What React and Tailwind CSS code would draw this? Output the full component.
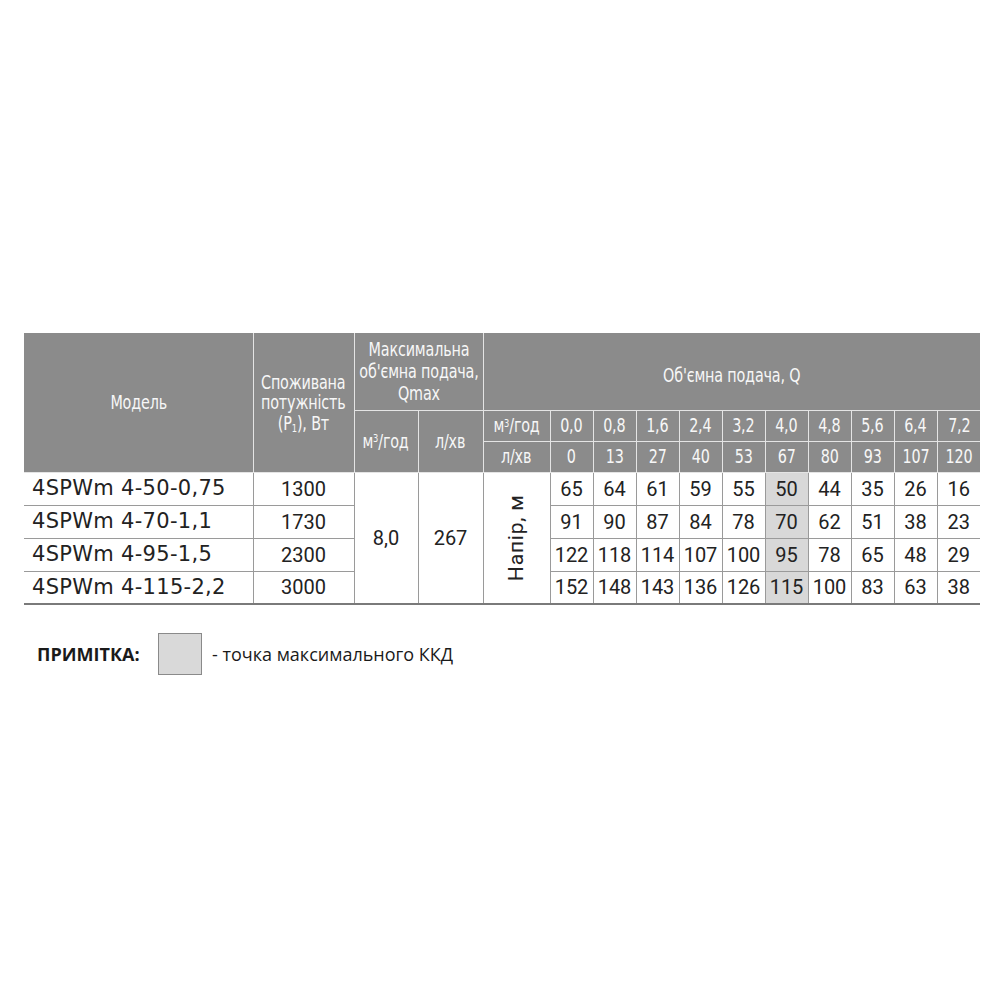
const FLOW_M3 = ['0,0', '0,8', '1,6', '2,4', '3,2', '4,0', '4,8', '5,6', '6,4', '7,2'];
const FLOW_L = ['0', '13', '27', '40', '53', '67', '80', '93', '107', '120'];
const BEST = 5;

const ROWS = [
  { model: '4SPWm 4-50-0,75', power: '1300', head: [65, 64, 61, 59, 55, 50, 44, 35, 26, 16] },
  { model: '4SPWm 4-70-1,1', power: '1730', head: [91, 90, 87, 84, 78, 70, 62, 51, 38, 23] },
  { model: '4SPWm 4-95-1,5', power: '2300', head: [122, 118, 114, 107, 100, 95, 78, 65, 48, 29] },
  { model: '4SPWm 4-115-2,2', power: '3000', head: [152, 148, 143, 136, 126, 115, 100, 83, 63, 38] },
];

const cond = { fontFamily: '"DejaVu Sans Condensed", "DejaVu Sans", sans-serif', fontStretch: 'condensed' };

// header type is a narrow face; squeeze it horizontally
function Narrow({ children }) {
  return <span className="inline-block scale-x-[0.84] whitespace-nowrap">{children}</span>;
}

function HeadCell({ children, className = '', ...rest }) {
  return (
    <th
      {...rest}
      className={`border-[1.5px] border-[#e4e4e4] bg-[#8b8b8b] p-0 text-center align-middle font-normal text-[#f7f7f7] ${className}`}
    >
      <div className="flex flex-col items-center">{children}</div>
    </th>
  );
}

export default function App() {
  return (
    <div className="min-h-[1000px] w-[1000px] bg-white pl-[24px] pt-[333px]" style={{ fontFamily: 'Roboto, "Liberation Sans", sans-serif' }}>
      <table className="w-[956px] table-fixed border-collapse">
        <colgroup>
          <col className="w-[229px]" />
          <col className="w-[101px]" />
          <col className="w-[64px]" />
          <col className="w-[65px]" />
          <col className="w-[67px]" />
          {FLOW_M3.map((v) => (
            <col key={v} className="w-[43px]" />
          ))}
        </colgroup>
        <thead style={cond} className="text-[19px] leading-[20.5px] tracking-[-0.2px]">
          <tr className="h-[77px]">
            <HeadCell rowSpan={3} className="border-l-0 border-t-0">
              <Narrow>Модель</Narrow>
            </HeadCell>
            <HeadCell rowSpan={3} className="border-t-0">
              <Narrow>Споживана</Narrow>
              <Narrow>потужність</Narrow>
              <Narrow>
                (P<sub className="text-[11px]">1</sub>), Вт
              </Narrow>
            </HeadCell>
            <HeadCell colSpan={2} className="border-t-0 leading-[22px]">
              <Narrow>Максимальна</Narrow>
              <Narrow>об'ємна подача,</Narrow>
              <Narrow>Qmax</Narrow>
            </HeadCell>
            <HeadCell colSpan={11} className="border-r-0 border-t-0">
              <span className="relative top-[4px]">
                <Narrow>Об'ємна подача, Q</Narrow>
              </span>
            </HeadCell>
          </tr>
          <tr className="h-[31px]">
            <HeadCell rowSpan={2}>
              <Narrow>
                м<sup className="text-[11px]">3</sup>/год
              </Narrow>
            </HeadCell>
            <HeadCell rowSpan={2}>
              <Narrow>л/хв</Narrow>
            </HeadCell>
            <HeadCell>
              <Narrow>
                м<sup className="text-[11px]">3</sup>/год
              </Narrow>
            </HeadCell>
            {FLOW_M3.map((v, i) => (
              <HeadCell key={v} className={i === FLOW_M3.length - 1 ? 'border-r-0' : ''}>
                <Narrow>{v}</Narrow>
              </HeadCell>
            ))}
          </tr>
          <tr className="h-[31px]">
            <HeadCell>
              <Narrow>л/хв</Narrow>
            </HeadCell>
            {FLOW_L.map((v, i) => (
              <HeadCell key={v} className={i === FLOW_L.length - 1 ? 'border-r-0' : ''}>
                <Narrow>{v}</Narrow>
              </HeadCell>
            ))}
          </tr>
        </thead>
        <tbody className="text-[20px] text-[#222]">
          {ROWS.map((r, ri) => (
            <tr key={r.model} className={`h-[33px] ${ri === ROWS.length - 1 ? 'border-b-2 border-[#7a7a7a]' : ''}`}>
              <td
                className="border-b border-r border-[#9a9a9a] pl-[8px] text-left text-[21px] tracking-[0.3px]"
                style={{ fontFamily: '"DejaVu Sans", sans-serif' }}
              >
                {r.model}
              </td>
              <td className="border-b border-r border-[#9a9a9a] text-center">{r.power}</td>
              {ri === 0 && (
                <>
                  <td rowSpan={4} className="border-r border-[#9a9a9a] text-center align-middle">8,0</td>
                  <td rowSpan={4} className="border-r border-[#9a9a9a] text-center align-middle">267</td>
                  <td rowSpan={4} className="border-r border-[#9a9a9a] text-center align-middle">
                    <div className="flex h-full items-center justify-center">
                      <span className="inline-block -rotate-90 whitespace-nowrap text-[21px] tracking-[0.8px]">Напір, м</span>
                    </div>
                  </td>
                </>
              )}
              {r.head.map((h, i) => (
                <td
                  key={i}
                  className={`border-b border-[#9a9a9a] p-0 text-center ${i < r.head.length - 1 ? 'border-r' : ''} ${
                    i === BEST ? 'bg-[#d8d8d8]' : ''
                  }`}
                >
                  {h}
                </td>
              ))}
            </tr>
          ))}
        </tbody>
      </table>

      <div className="mt-[28px] flex items-center" style={{ fontFamily: '"Open Sans", sans-serif' }}>
        <span className="ml-[13px] w-[121px] text-[18px] font-bold text-[#1a1a1a]">ПРИМІТКА:</span>
        <span className="h-[42px] w-[44px] border border-[#8a8a8a] bg-[#d9d9d9]" />
        <span className="ml-[10px] text-[18px] text-[#1a1a1a]">- точка максимального ККД</span>
      </div>
    </div>
  );
}
